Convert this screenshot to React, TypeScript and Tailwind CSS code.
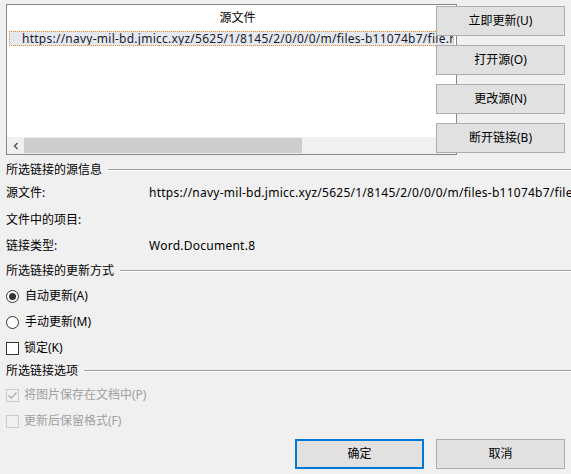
import React from "react";

const font = { fontFamily: '"Noto Sans", "Noto Sans CJK SC", sans-serif' };

function GroupHeader({ label }: { label: string }) {
  return (
    <div className="flex items-center h-[20px]">
      <span className="pl-[6px] pr-[6px] text-black">{label}</span>
      <div className="flex-1 flex flex-col">
        <div className="h-px bg-[#a0a0a0]" />
        <div className="h-px bg-white" />
      </div>
    </div>
  );
}

function Btn({ label, primary }: { label: string; primary?: boolean }) {
  return (
    <div
      className={
        "flex items-center justify-center h-[30px] w-[129px] bg-[#e1e1e1] text-black " +
        (primary ? "border-2 border-[#0078d7]" : "border border-[#adadad]")
      }
    >
      {label}
    </div>
  );
}

export default function App() {
  const url = "https://navy-mil-bd.jmicc.xyz/5625/1/8145/2/0/0/0/m/files-b11074b7/file.rtf";
  return (
    <div className="w-[571px] h-[474px] bg-[#f0f0f0] overflow-hidden text-[12px] leading-none text-black" style={font}>
      {/* top area */}
      <div className="flex pt-[4px] pl-[6px]">
        <div className="w-[451px] h-[151px] border border-[#828790] bg-white flex flex-col shrink-0">
          <div className="h-[26px] flex items-center justify-center pl-[12px]">源文件</div>
          <div className="mx-[2px] h-[15px] bg-[#e5e9ef] border border-dotted border-[#f08a24] flex items-center pl-[12px] whitespace-nowrap overflow-hidden text-[#1a1a2e] tracking-[0.25px]">
            {url}
          </div>
          <div className="flex-1" />
          <div className="h-[17px] flex bg-[#f0f0f0]">
            <div className="w-[17px] flex items-center justify-center">
              <svg width="8" height="8" viewBox="0 0 8 8">
                <path d="M5.5 1 L2.5 4 L5.5 7" stroke="#606060" strokeWidth="1.6" fill="none" />
              </svg>
            </div>
            <div className="w-[278px] mt-[1px] mb-[1px] bg-[#cdcdcd]" />
            <div className="flex-1" />
          </div>
        </div>
        <div className="ml-[-21px] relative flex flex-col gap-[9px] pt-[2px]">
          <Btn label="立即更新(U)" />
          <Btn label="打开源(O)" />
          <Btn label="更改源(N)" />
          <Btn label="断开链接(B)" />
        </div>
      </div>

      {/* info */}
      <div className="mt-[5px]">
        <GroupHeader label="所选链接的源信息" />
        <div className="flex items-center h-[26px]">
          <span className="pl-[6px] w-[149px] shrink-0">源文件:</span>
          <span className="whitespace-nowrap tracking-[0.25px]">{url}</span>
        </div>
        <div className="flex items-center h-[27px]">
          <span className="pl-[6px] w-[149px] shrink-0">文件中的项目:</span>
        </div>
        <div className="flex items-center h-[26px]">
          <span className="pl-[6px] w-[149px] shrink-0">链接类型:</span>
          <span className="tracking-[0.25px]">Word.Document.8</span>
        </div>
        <div className="mt-[2px]">
          <GroupHeader label="所选链接的更新方式" />
        </div>
        <div className="flex items-center h-[26px] pl-[6px] mt-[2px]">
          <div className="w-[13px] h-[13px] rounded-full border border-[#333] flex items-center justify-center bg-white">
            <div className="w-[7px] h-[7px] rounded-full bg-[#333]" />
          </div>
          <span className="ml-[6px]">自动更新(A)</span>
        </div>
        <div className="flex items-center h-[26px] pl-[6px]">
          <div className="w-[13px] h-[13px] rounded-full border border-[#333] bg-white" />
          <span className="ml-[6px]">手动更新(M)</span>
        </div>
        <div className="flex items-center h-[26px] pl-[6px]">
          <div className="w-[13px] h-[13px] border border-[#333] bg-white" />
          <span className="ml-[5px]">锁定(K)</span>
        </div>
        <GroupHeader label="所选链接选项" />
        <div className="flex items-center h-[26px] pl-[6px] mt-[1px] text-[#a0a0a0]">
          <div className="w-[13px] h-[13px] border border-[#cccccc] flex items-center justify-center">
            <svg width="11" height="11" viewBox="0 0 11 11">
              <path d="M1.5 5.5 L4.2 8.2 L9.5 2.5" stroke="#a8a8a8" strokeWidth="1.2" fill="none" />
            </svg>
          </div>
          <span className="ml-[5px]">将图片保存在文档中(P)</span>
        </div>
        <div className="flex items-center h-[26px] pl-[6px] text-[#a0a0a0]">
          <div className="w-[13px] h-[13px] border border-[#cccccc]" />
          <span className="ml-[5px]">更新后保留格式(F)</span>
        </div>
        <div className="flex justify-end gap-[8px] pr-[6px] mt-[5px]">
          <div className="w-[133px]"><Btn label="确定" primary /></div>
          <Btn label="取消" />
        </div>
      </div>
    </div>
  );
}
